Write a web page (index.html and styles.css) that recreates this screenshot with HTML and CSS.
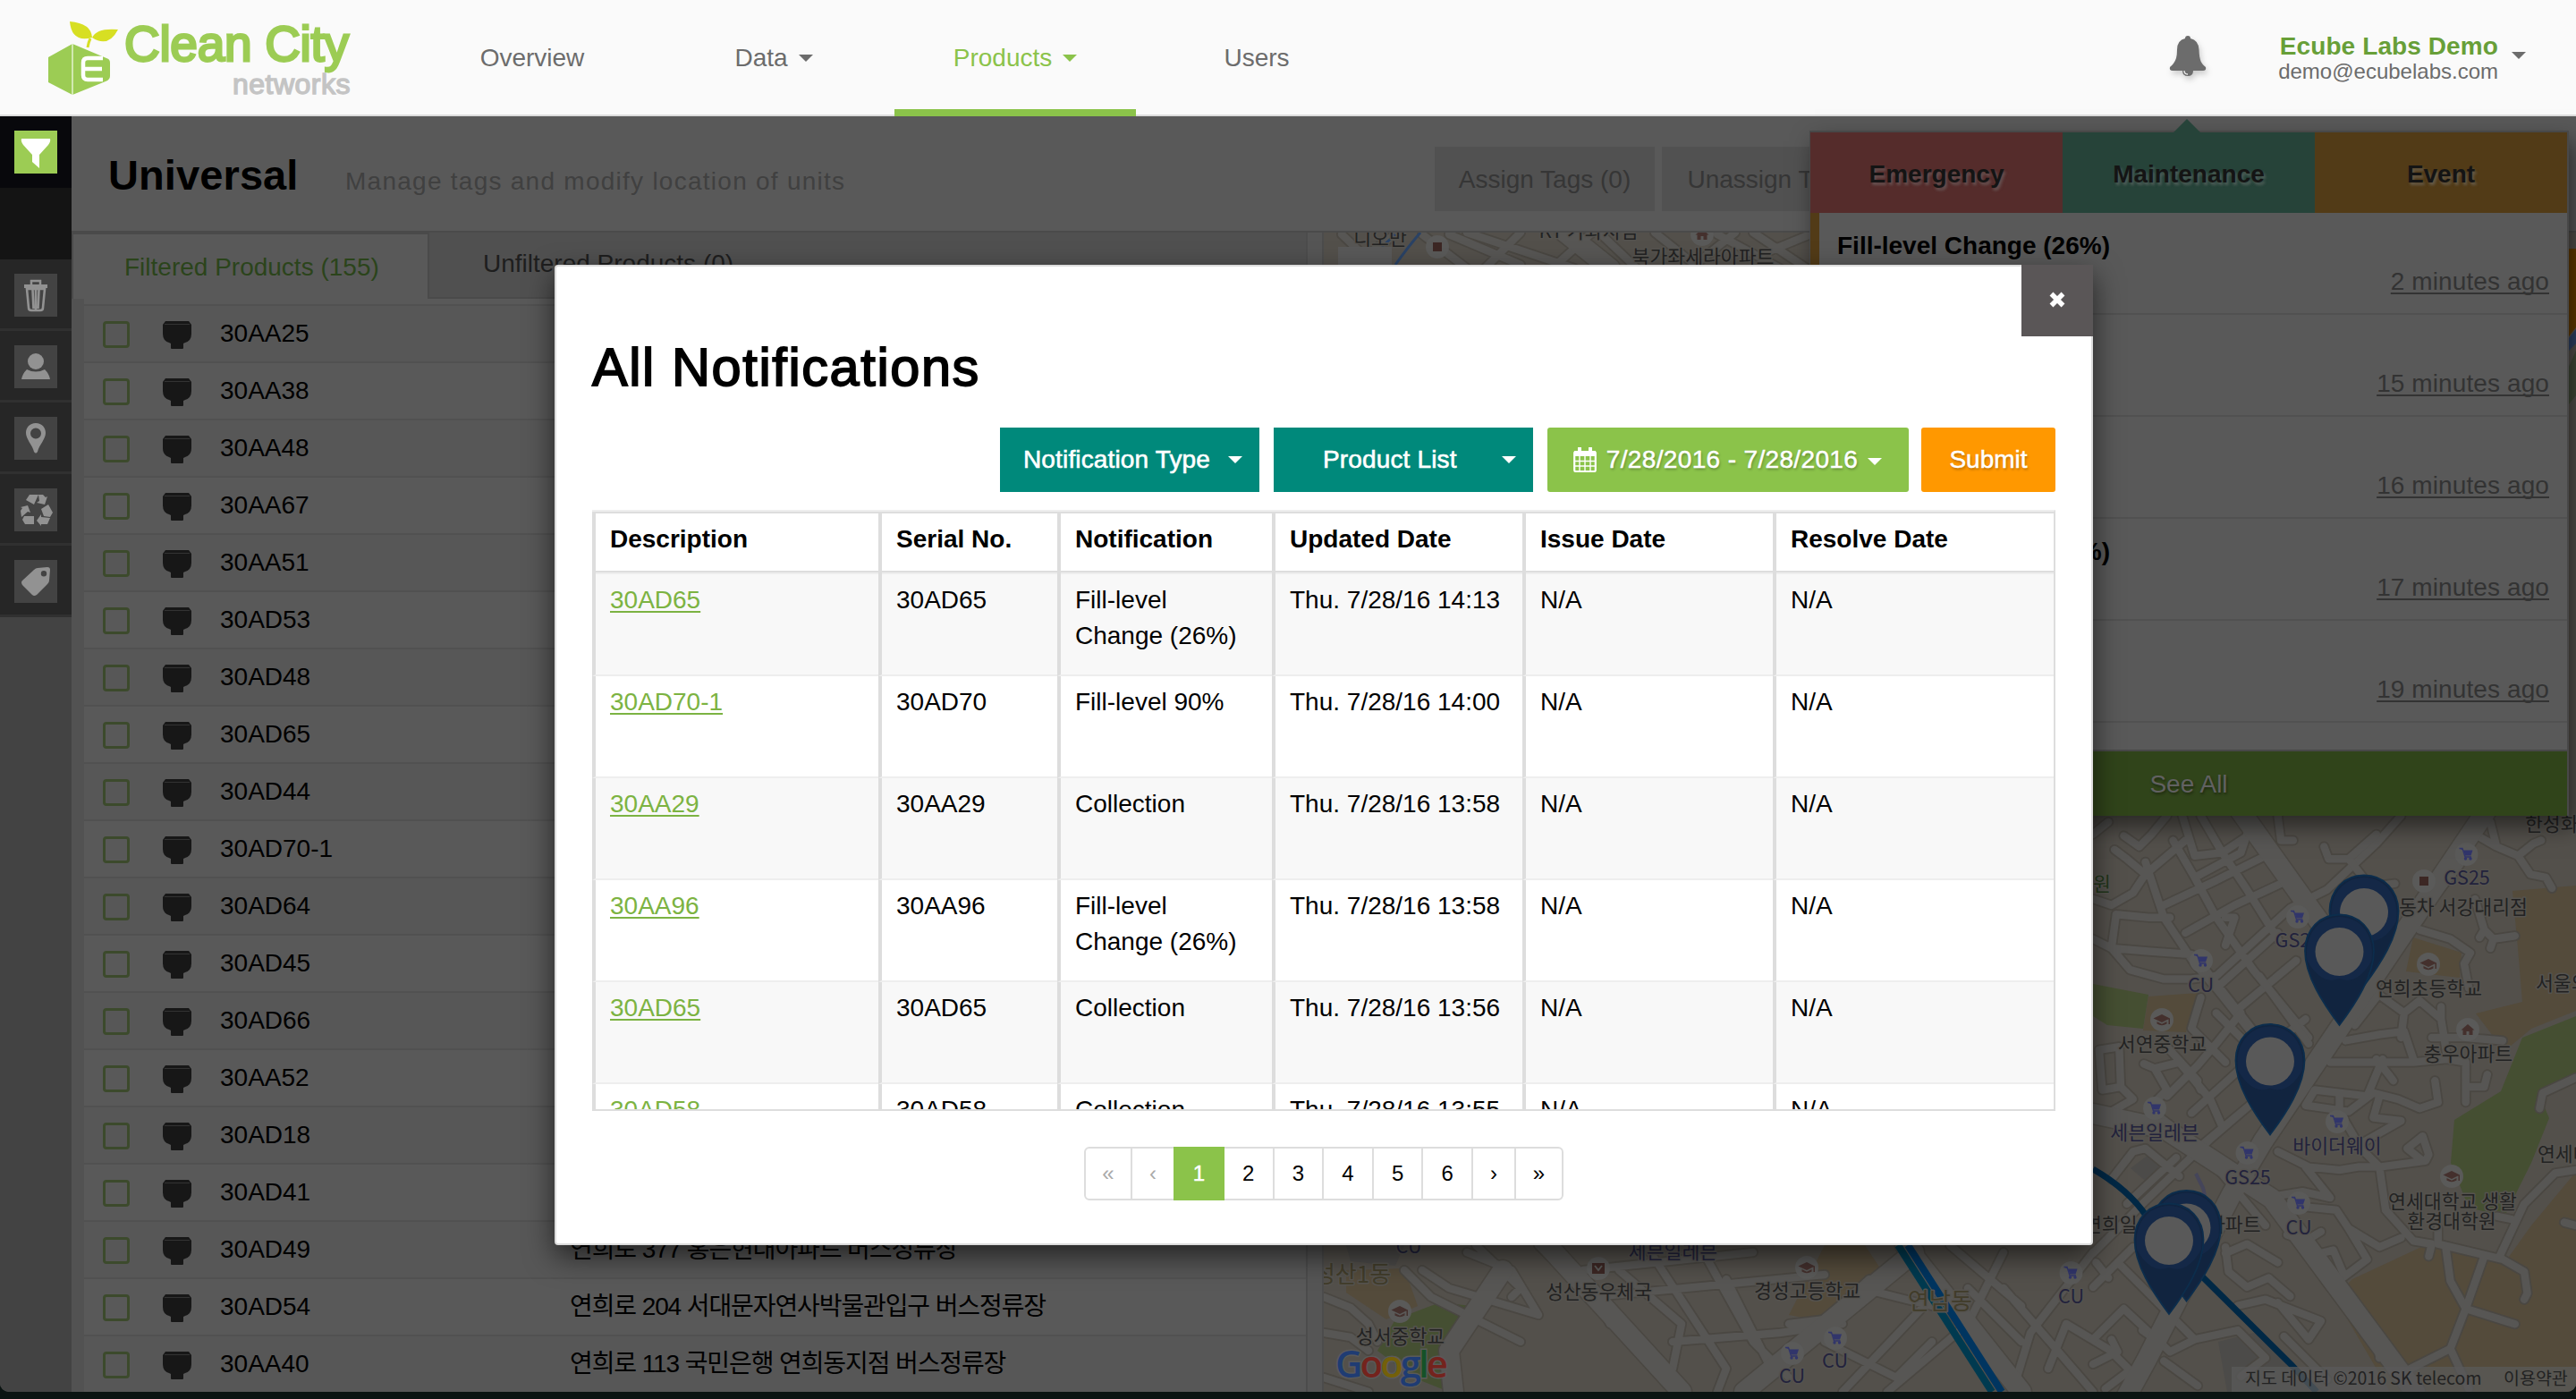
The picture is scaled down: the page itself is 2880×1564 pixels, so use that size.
FILE: index.html
```html
<!DOCTYPE html>
<html lang="en">
<head>
<meta charset="utf-8">
<title>Clean City Networks</title>
<link rel="stylesheet" href="styles.css">
</head>
<body>
<svg class="sprite" aria-hidden="true">
  <symbol id="bin" viewBox="0 0 32 31"><path d="M3 0h26l3 4v10q0 8-7 10l-2 1v5q0 1-1 1H10q-1 0-1-1v-5l-2-1Q0 22 0 14V4z" fill="#171717"/><path d="M2 3.5h28" stroke="#333" stroke-width="1"/></symbol>
  <g id="cart"><circle r="13" fill="#5a5a59"/><path d="M-7-6h3l2.5 7.5H5L7-4.500H-3.500z" fill="#31356b"/><path d="M-8-6.500h3.500l3 9.500H5.500" fill="none" stroke="#31356b" stroke-width="1.300"/><circle cx="-1" cy="5" r="1.700" fill="#31356b"/><circle cx="4.500" cy="5" r="1.700" fill="#31356b"/></g>
  <g id="school"><circle r="13" fill="#5a5a59"/><path d="M-9.500-1.500L0-6l9 4.500L0 3zM-5.500 2L0 4.800 5.500 2v2.500Q0 8-5.500 4.500zM7.500-1.500H9V5H7.500z" fill="#44302d"/></g>
  <g id="house"><circle r="13" fill="#5a5a59"/><path d="M0-6l7.500 6.500H5.500V6h-4V2h-3v4h-4V.5h-2z" fill="#44302d"/></g>
  <g id="square"><circle r="13" fill="#5a5a59"/><path d="M-5-5H5V5H-5z" fill="#3c2724"/></g>
  <g id="post"><circle r="13" fill="#5a5a59"/><path d="M-7-6H7V6H-7z" fill="#3c2724"/><path d="M-4-3l4 5 4-5" fill="none" stroke="#5a5a59" stroke-width="2"/></g>
  <g id="pin"><path d="M0-41.500C22-41.500 38.500-25 38.500-1 38.500 27 18 58 0 82-18 58-38.500 27-38.500-1-38.500-25-22-41.500 0-41.500z" fill="#11243f" stroke="#0c2d4c" stroke-width="1.800"/><path d="M-36 10C-40-20-22-39 0-39S40-20 36 10Q20 38 0 30-20 38-36 10z" fill="#152b4c" opacity=".7"/><circle r="27" fill="#595959"/></g>
</svg>

<header class="header">
  <div class="brand">
    <svg class="brand-mark" width="82" height="86" viewBox="52 22 82 86">
      <path d="M81 49L54 64V92L81 106 118 91Q123 89 123 85V70Q123 66 119 65z" fill="#9ccc54"/>
      <path d="M81 49v57" stroke="#e4f3cf" stroke-width="1.500"/>
      <path d="M115 65H98q-5 0-5 5v14q0 5 5 5h17M94 77h20" fill="none" stroke="#fff" stroke-width="4.500"/>
      <path d="M98 53q1-6 3-10" fill="none" stroke="#d7df23" stroke-width="3"/>
      <path d="M78 24q24 2 25 18-23 6-25-18zM132 33q-24-2-29 9 18 12 29-9z" fill="#d7df23"/>
    </svg>
    <div class="brand-text"><span class="brand-name">Clean City</span><span class="brand-sub">networks</span></div>
  </div>
  <nav class="nav">
    <a class="nav-item">Overview</a>
    <a class="nav-item">Data<i class="caret"></i></a>
    <a class="nav-item is-active">Products<i class="caret"></i></a>
    <a class="nav-item">Users</a>
  </nav>
  <svg class="bell" width="42" height="48" viewBox="0 0 42 48"><path d="M21 0q3 0 3 3 9 2 9.500 12.500C34 28 36 31 41 35q1 4-3 4H4q-4 0-3-4 5-4 7-10 1-4 1-9.500Q9 5 18 3q0-3 3-3z" fill="#6c6c6c"/><path d="M15 39h12q0 6-6 6t-6-6z" fill="#6c6c6c"/><path d="M17 39q0 4 4 4" stroke="#eee" fill="none" stroke-width="1.300"/></svg>
  <div class="account"><strong>Ecube Labs Demo</strong><span>demo@ecubelabs.com</span></div>
  <i class="caret account-caret"></i>
</header>

<main class="main">
  <aside class="sidebar">
    <div class="side-item side-filter"><svg class="side-icon" viewBox="0 0 48 48"><path fill="#fff" d="M8 9h32q1 3-2 7L28 27v15l-8-7v-8L10 16Q7 12 8 9z"/></svg></div>
    <div class="side-gap"></div>
    <div class="side-item"><svg class="side-icon" viewBox="0 0 48 48"><path fill="none" stroke="#929292" stroke-width="2.500" d="M19 12V8h10v4"/><path fill="#929292" d="M11 12h26v4H11z"/><path fill="none" stroke="#929292" stroke-width="2.600" d="M14 17l2 21q0 3 3 3h10q3 0 3-3l2-21zM20.500 18l1 21M27.500 18l-1 21M24 18v22"/></svg></div>
    <div class="side-item"><svg class="side-icon" viewBox="0 0 48 48"><circle cx="24" cy="18" r="9" fill="#929292"/><path fill="#929292" d="M14 27q10 5 20 0 5 5 6 11H8q1-6 6-11z"/></svg></div>
    <div class="side-item"><svg class="side-icon" viewBox="0 0 48 48"><path fill="#929292" fill-rule="evenodd" d="M24 7c7 0 11 5 11 11 0 7-7 13-9 21q-2 3-4 0c-2-8-9-14-9-21 0-6 4-11 11-11zm0 5.500a6 6 0 100 12 6 6 0 000-12z"/></svg></div>
    <div class="side-item"><svg class="side-icon" viewBox="0 0 48 48"><g fill="#929292"><path d="M17 7h10l-5 11-9-5zM27 7l5 0 3 3 2-1-3 9-9-2 3-2zM38 18l5 9-3 5-7-1-3-8zM40 33l-3 7h-7v2l-5-6 5-7v3zM22 31v9H12l-3-5 2-4zM8 32l-1-7 2-3-2-1 8-2 3 8-3-1z"/></g></svg></div>
    <div class="side-item"><svg class="side-icon" viewBox="0 0 48 48"><path fill="#929292" fill-rule="evenodd" d="M26 9l11-1q3 0 3 3l-1 12q0 2-2 4L25 39q-3 2-5 0L9 28q-2-3 0-5L22 11q2-2 4-2zm7 3a3.200 3.200 0 100 6.400 3.200 3.200 0 000-6.400z"/></svg></div>
  </aside>

  <section class="content">
    <div class="toolbar">
      <div class="heading"><h1>Universal</h1><p>Manage tags and modify location of units</p></div>
      <button class="tag-btn">Assign Tags (0)</button>
      <button class="tag-btn">Unassign Tags (0)</button>
    </div>
    <div class="split">
      <div class="products">
        <div class="tabs"><div class="tab is-current">Filtered Products (155)</div><div class="tab tab-rest">Unfiltered Products (0)</div></div>
        <ul class="list">
          <li><i class="check"></i><svg class="bin"><use href="#bin"/></svg><span>30AA25</span></li>
          <li><i class="check"></i><svg class="bin"><use href="#bin"/></svg><span>30AA38</span></li>
          <li><i class="check"></i><svg class="bin"><use href="#bin"/></svg><span>30AA48</span></li>
          <li><i class="check"></i><svg class="bin"><use href="#bin"/></svg><span>30AA67</span></li>
          <li><i class="check"></i><svg class="bin"><use href="#bin"/></svg><span>30AA51</span></li>
          <li><i class="check"></i><svg class="bin"><use href="#bin"/></svg><span>30AD53</span></li>
          <li><i class="check"></i><svg class="bin"><use href="#bin"/></svg><span>30AD48</span></li>
          <li><i class="check"></i><svg class="bin"><use href="#bin"/></svg><span>30AD65</span></li>
          <li><i class="check"></i><svg class="bin"><use href="#bin"/></svg><span>30AD44</span></li>
          <li><i class="check"></i><svg class="bin"><use href="#bin"/></svg><span>30AD70-1</span></li>
          <li><i class="check"></i><svg class="bin"><use href="#bin"/></svg><span>30AD64</span></li>
          <li><i class="check"></i><svg class="bin"><use href="#bin"/></svg><span>30AD45</span></li>
          <li><i class="check"></i><svg class="bin"><use href="#bin"/></svg><span>30AD66</span></li>
          <li><i class="check"></i><svg class="bin"><use href="#bin"/></svg><span>30AA52</span></li>
          <li><i class="check"></i><svg class="bin"><use href="#bin"/></svg><span>30AD18</span></li>
          <li><i class="check"></i><svg class="bin"><use href="#bin"/></svg><span>30AD41</span></li>
          <li><i class="check"></i><svg class="bin"><use href="#bin"/></svg><span>30AD49</span><span class="address">연희로 377 홍은현대아파트 버스정류장</span></li>
          <li><i class="check"></i><svg class="bin"><use href="#bin"/></svg><span>30AD54</span><span class="address">연희로 204 서대문자연사박물관입구 버스정류장</span></li>
          <li><i class="check"></i><svg class="bin"><use href="#bin"/></svg><span>30AA40</span><span class="address">연희로 113 국민은행 연희동지점 버스정류장</span></li>
        </ul>
      </div>
      <div class="gutter"></div>
      <svg class="map" viewBox="1480 260 1400 1296">
        <defs>
          <!-- neighbourhood streets east of the station -->
          <g id="streets-east" class="streets" transform="translate(2340 912) scale(.34439)">
            <path d="M0 270L60 290 130 250 170 190 300 80M170 190L110 140 70 110M100 65L150 100 190 60 240 0M170 150L230 330 330 480 400 560 560 760M260 80L330 200 400 330 520 500 700 720M350 0L420 120 500 240 600 400M290 0L330 130 420 120 540 40M330 200L480 120 500 60M230 290L400 210 560 130M300 380L460 290 610 220M75 320L60 430 180 440 320 450M60 430L120 500 230 530 320 530 400 520 640 300 760 240 920 90 1000 0M0 400L60 430M75 320L180 330 250 330M430 330L460 330 430 420M350 480L460 620 600 800M400 560L600 380M480 620L660 470M560 760L690 660M0 60L50 20"/>
            <path d="M20 760L85 750 90 880 30 890zM165 805L200 820 280 800 380 920 420 1010M90 880L130 920 60 960M200 820L240 890 180 950 350 1080 560 1330M240 910L340 810 400 740 480 640M320 965L480 820 560 760M340 1080L520 930 640 800M0 1420L160 1260 380 1050 520 930M60 1180L130 1090 170 1080M110 1260L270 1110M170 1080L280 1170M340 870L350 890M240 750L340 860M350 590L320 690 430 800M400 640L500 740M540 520L620 630 700 740"/>
            <path d="M600 0L610 80 650 80M750 100L765 140 830 140 920 60M830 140L900 230 980 220M1240 60L1310 100 1380 130 1430 90 1455 80M1290 20L1310 100M1380 130L1420 190 1470 200 1490 235M1060 370L1160 400 1225 445 1205 480 1220 560M1240 270L1270 370 1300 400 1370 390M1270 370L1255 395M1300 400L1290 430M1060 340L1110 260 1190 160M820 730L930 710 1010 700 1040 790M900 560L1010 640 1000 720M920 590L850 680M1010 640L1060 600 1130 660 1140 720 1210 720 1330 730M1130 660L1130 620M1100 720L1140 720 1150 790M770 800L1040 800 1150 790 1210 800 1210 930M1210 880L1270 880 1280 840M920 790L960 840 975 860M940 790L890 910 720 890M720 890L690 940 830 960 910 900 990 920 1060 950 1120 930 1110 860M930 910L910 980 1000 990 860 1070M800 910L800 960 870 1080 930 1140 1080 1120 1090 1100 1070 1040 1020 1080 1070 1120M600 1090L700 1140 800 1150 860 1140 930 1140 950 1280 1040 1380 1100 1390 1090 1430M560 1240L680 1220 770 1240 690 1140M690 1270L790 1280 830 1340 930 1400 1000 1370M830 1340L890 1440 770 1530 700 1430 780 1410 810 1480M630 1360L690 1380 740 1350"/>
            <path d="M1120 1340L1120 1390 1330 1440 1400 1480 1410 1550 1400 1570M1320 1430L1400 1260 1500 1160 1568 1150M1145 1400L1160 1510 1210 1600 1370 1650M1270 1430L1210 1600 1160 1730 1020 1800M1160 1730L1220 1860M860 1620L920 1680 930 1760M1450 950L1460 900 1568 850M1310 1300L1360 1310M1568 1330L1530 1320M430 1400L440 1480 500 1530 570 1500 640 1560M430 1420L500 1390 600 1450M470 1590L560 1570 740 1640 700 1700 600 1580M80 1450L130 1400M0 1530L80 1450 220 1590 330 1700 250 1740 100 1600 0 1700M50 1500L10 1450M330 1700L470 1670 560 1760M620 1690L760 1830M160 1670L230 1720M480 1820L560 1760M0 1780L80 1740 60 1700M40 1860L120 1800 60 1740M230 1770L340 1850"/>
          </g>
          <g id="streets-west" class="streets">
            <path d="M1480 1450L1510 1462 1530 1480 1540 1500M1480 1490L1510 1495 1530 1510M1480 1540L1530 1556M1640 1400L1690 1420 1720 1470 1620 1440 1590 1420M1570 1420L1600 1450 1640 1470 1700 1500M1650 1392L1700 1440 1690 1450M1720 1392L1790 1460 1800 1480M1770 1420L1960 1400M1780 1450L2040 1425M1810 1420L1880 1480 1870 1530M1840 1392L1930 1530 1920 1556M1900 1392L1960 1500 2000 1540M1870 1500L1990 1490 2060 1480M1930 1430L1980 1530M2000 1480L2040 1475 2090 1430M2080 1440L2200 1470M2040 1500L2120 1540 2160 1500M2060 1556L2170 1440M2110 1556L2200 1480 2240 1400M2250 1556L2270 1490 2340 1400M2240 1440L2340 1556M2200 1440L2260 1500M2290 1530L2310 1480 2360 1510M2180 1392L2260 1460"/>
            <path d="M1480 320L1560 262M1500 262L1540 300M1590 262L1640 300M1620 262L1700 296M1660 300L1700 260M1640 260L1760 300M1780 260L1740 296M1790 262L1830 300M1850 260L1900 300M1890 300L1940 260M1960 260L2020 300M1980 280L2024 262M1920 262L1990 300"/>
          </g>
          <g id="avenues" class="streets">
            <path d="M1730 1392L1880 1556M1950 1556L2140 1400M1625 1556L1620 1510 1680 1420M2130 1392L2260 1556" />
            <path d="M2784 900L2530 1276 2495 1335 2400 1520 2378 1560M2500 900L2600 1040M2340 1245L2420 1262 2540 1340 2700 1556M1750 260L1800 300"/>
          </g>
        </defs>
        <path class="land" d="M1480 260H2880V1556H1480z"/>
        <path class="tan" d="M1505 1420L1570 1418 1585 1460 1550 1475 1505 1445zM2040 1392H2085L2110 1430 2050 1480 2000 1470zM2402 1114L2458 1110 2444 1154 2396 1152zM2698 1048L2752 1065 2750 1093 2690 1086z"/>
        <path class="tan" d="M2809 996L2880 990V1130L2830 1150 2800 1175 2768 1133 2820 1120 2815 1060zM2630 1430L2720 1388 2800 1412 2830 1370 2880 1310V1556H2672L2610 1450z"/>
        <path class="green" d="M2340 1100L2402 1112 2396 1150 2356 1146 2340 1136zM2744 1252L2796 1220 2820 1160 2880 1136V1205L2838 1222 2850 1250 2830 1300 2800 1360 2760 1350 2740 1300zM1560 1475L1610 1456 1645 1460 1620 1500V1556L1580 1540 1540 1510z"/>
        <path class="paved" d="M2406 1288L2440 1310 2410 1330 2382 1306zM2480 1500L2520 1490 2600 1556H2490zM1505 1392H1570L1560 1415 1510 1410z"/>
        <use href="#streets-west" class="casing"/><use href="#streets-east" class="casing"/><use href="#avenues" class="casing wide"/>
        <use href="#streets-west" class="road"/><use href="#streets-east" class="road"/><use href="#avenues" class="road wide"/>
        <path d="M2872 278h8v88l-8 10z" fill="#633b00"/><path d="M2872 378l8-10v16l-8 8z" fill="#2f4365"/><path d="M2872 410l8-18v50l-8 10z" fill="#424a38"/>
        <path d="M2340 1307Q2380 1330 2400 1360L2462 1427 2562 1526 2590 1556" fill="none" stroke="#002845" stroke-width="7"/>
        <path d="M2122 1392L2227 1556" stroke="#003a50" stroke-width="8"/><path d="M2133 1392L2238 1556" stroke="#003560" stroke-width="8"/>
        <path d="M1560 262L1545 276M1588 260Q1575 275 1560 296" stroke="#2a4265" stroke-width="3" fill="none"/>
        <path d="M2455 1312l8 16 2 8" stroke="#45455a" stroke-width="4" fill="none"/>
        <path d="M2495 1528H2880v28H2495z" fill="#595959" opacity=".75"/>
        <g transform="translate(13 13)">
          <use href="#cart" x="2744.500" y="942"/><use href="#square" x="2697" y="972"/><use href="#cart" x="2556" y="1012"/><use href="#cart" x="2448" y="1061"/><use href="#school" x="2702" y="1065"/><use href="#school" x="2404" y="1127"/><use href="#house" x="2746" y="1138"/><use href="#cart" x="2396" y="1226"/><use href="#cart" x="2600" y="1241"/><use href="#cart" x="2499.500" y="1276"/><use href="#school" x="2728" y="1302"/><use href="#cart" x="2557" y="1332"/><use href="#cart" x="2302.500" y="1410"/>
          <use href="#post" x="1774" y="1405"/><use href="#school" x="2007" y="1404"/><use href="#school" x="1552" y="1453"/><use href="#cart" x="2039" y="1483"/><use href="#cart" x="1991" y="1500"/><use href="#square" x="1594" y="263"/><use href="#house" x="1890" y="249"/>
        </g>
        <g class="label middle">
          <text class="shop" x="2758" y="989">GS25</text><text class="shop" x="2460.500" y="1108.500">CU</text><text x="2715.500" y="1113">연희초등학교</text><text x="2417.500" y="1175">서연중학교</text><text x="2759.500" y="1186">충우아파트</text><text class="shop" x="2409" y="1273.500">세븐일레븐</text><text class="shop" x="2613" y="1288.500">바이더웨이</text><text class="shop" x="2513" y="1323.500">GS25</text><text x="2742" y="1351">연세대학교 생활</text><text x="2741" y="1373">환경대학원</text><text class="shop" x="2570" y="1379.500">CU</text><text class="shop" x="2315.500" y="1457">CU</text>
          <text class="shop" x="1575" y="1401">CU</text><text x="1787.500" y="1452">성산동우체국</text><text class="shop" x="1870.500" y="1407">세븐일레븐</text><text x="2020.500" y="1451">경성고등학교</text><text x="1565.500" y="1502">성서중학교</text><text class="shop" x="2051.500" y="1529">CU</text><text class="shop" x="2003.500" y="1546">CU</text><text x="1543" y="274">디오만</text><text x="1776" y="266">KT 가좌지점</text><text x="1904" y="295">북가좌세라아파트</text>
          <text class="district" x="2169" y="1464">연남동</text><text class="district" x="1512" y="1434">성산1동</text>
        </g>
        <g class="label">
          <text class="shop" x="2543.500" y="1059">GS25</text><text x="2682" y="1022">동차 서강대리점</text><text x="2835" y="1107">서울외국인학교</text><text x="2837" y="1298">연세대학교</text><text x="2823" y="929">한성화교</text><text x="2330" y="1377">연희일</text><text x="2468" y="1377">아파트</text><text class="park" x="2340" y="996">원</text>
          <text class="legal" x="2510" y="1548">지도 데이터 ©2016 SK telecom</text><text class="legal" x="2799" y="1548">이용약관</text>
        </g>
        <path d="M1496 276h60v60h-60z" fill="#595959"/>
        <g>
          <use href="#pin" x="2643" y="1020"/><use href="#pin" x="2615.500" y="1064"/><use href="#pin" x="2538" y="1186.500"/><use href="#pin" x="2444.500" y="1372.500"/><use href="#pin" x="2425" y="1387"/>
        </g>
        <text class="google" x="1493" y="1540"><tspan fill="#1f3c73">G</tspan><tspan fill="#74231d">o</tspan><tspan fill="#74600a">o</tspan><tspan fill="#1f3c73">g</tspan><tspan fill="#155228">l</tspan><tspan fill="#74231d">e</tspan></text>
      </svg>
    </div>
  </section>
</main>

<aside class="panel">
  <div class="panel-tabs"><span class="emergency">Emergency</span><span class="maintenance">Maintenance</span><span class="event">Event</span></div>
  <div class="alert"><b>Fill-level Change (26%)</b><u>2 minutes ago</u></div>
  <div class="alert"><b></b><u>15 minutes ago</u></div>
  <div class="alert"><b></b><u>16 minutes ago</u></div>
  <div class="alert"><b>Fill-level Change (26%)</b><u>17 minutes ago</u></div>
  <div class="alert"><b></b><u>19 minutes ago</u></div>
  <div class="see-all">See All</div>
</aside>

<section class="modal">
  <div class="modal-top">
    <h2>All Notifications</h2>
    <button class="close"><svg width="20" height="20" viewBox="0 0 20 20"><path d="M3.500 3.500l13 13M16.500 3.500l-13 13" stroke="#fff" stroke-width="5.500"/></svg></button>
  </div>
  <div class="filters">
    <button class="filter teal"><span>Notification Type</span><i class="caret"></i></button>
    <button class="filter teal"><span>Product List</span><i class="caret"></i></button>
    <button class="filter dates"><svg width="26" height="28" viewBox="0 0 26 28"><rect x="1.200" y="5" width="23.600" height="22" rx="1.500" fill="none" stroke="#fff" stroke-width="2.200"/><path d="M1 4h24v6H1z" fill="#fff"/><path d="M7 1v6M19 1v6" stroke="#fff" stroke-width="4" stroke-linecap="round"/><path d="M7 10v16M13 10v16M19 10v16M2 15.500h22M2 21h22" stroke="#fff" stroke-width="1.400"/></svg><span>7/28/2016 - 7/28/2016</span><i class="caret"></i></button>
    <button class="filter submit">Submit</button>
  </div>
  <div class="table">
    <div class="tr th"><span>Description</span><span>Serial No.</span><span>Notification</span><span>Updated Date</span><span>Issue Date</span><span>Resolve Date</span></div>
    <div class="tr odd"><span><a>30AD65</a></span><span>30AD65</span><span>Fill-level Change (26%)</span><span>Thu. 7/28/16 14:13</span><span>N/A</span><span>N/A</span></div>
    <div class="tr"><span><a>30AD70-1</a></span><span>30AD70</span><span>Fill-level 90%</span><span>Thu. 7/28/16 14:00</span><span>N/A</span><span>N/A</span></div>
    <div class="tr odd"><span><a>30AA29</a></span><span>30AA29</span><span>Collection</span><span>Thu. 7/28/16 13:58</span><span>N/A</span><span>N/A</span></div>
    <div class="tr"><span><a>30AA96</a></span><span>30AA96</span><span>Fill-level Change (26%)</span><span>Thu. 7/28/16 13:58</span><span>N/A</span><span>N/A</span></div>
    <div class="tr odd"><span><a>30AD65</a></span><span>30AD65</span><span>Collection</span><span>Thu. 7/28/16 13:56</span><span>N/A</span><span>N/A</span></div>
    <div class="tr"><span><a>30AD58</a></span><span>30AD58</span><span>Collection</span><span>Thu. 7/28/16 13:55</span><span>N/A</span><span>N/A</span></div>
  </div>
  <div class="pager"><span class="off">«</span><span class="off narrow">‹</span><span class="current">1</span><span>2</span><span>3</span><span>4</span><span>5</span><span>6</span><span class="narrow">›</span><span class="last">»</span></div>
</section>
</body>
</html>
```
FILE: styles.css
```css
* { box-sizing: border-box; }
html, body { margin: 0; height: 100%; }
body {
  position: relative;
  height: 1564px;
  overflow: hidden;
  background: #0b1412;
  color: #000;
  font: 28px/40px "Liberation Sans", "Noto Sans CJK KR", sans-serif;
}
button { font: inherit; border: 0; padding: 0; margin: 0; }
.sprite { display: none; }
.caret { display: inline-block; border: 8px solid transparent; border-top-color: currentColor; border-bottom: 0; }

/* header */
.header { display: flex; align-items: center; height: 130px; background: #fafafa; border-bottom: 2px solid #dcdcdc; color: #6c6c6c; }
.brand { display: flex; width: 460px; height: 128px; padding: 22px 0 0 52px; }
.brand-text { display: flex; flex-direction: column; width: 262px; margin-left: 5px; }
.brand-name { color: #9ccc54; font-size: 55px; line-height: 56px; letter-spacing: -.3px; -webkit-text-stroke: 2.8px #9ccc54; margin-top: -1px; white-space: nowrap; }
.brand-sub { width: 253px; text-align: right; color: #c4c4c4; font-size: 32px; line-height: 32px; letter-spacing: .5px; -webkit-text-stroke: 1.4px #c4c4c4; margin-top: 1px; }
.nav { display: grid; grid-template-columns: repeat(4, 270px); height: 130px; align-self: flex-start; }
.nav-item { display: flex; align-items: center; justify-content: center; gap: 12px; padding-top: 8px; border-bottom: 8px solid transparent; }
.nav-item.is-active { color: #8bc34a; border-color: #8bc34a; }
.bell { margin-left: 885px; filter: drop-shadow(2px 4px 3px rgba(0, 0, 0, .18)); }
.account { display: flex; flex-direction: column; align-items: flex-end; width: 326px; line-height: 28px; padding-top: 3px; }
.account strong { color: #689f38; letter-spacing: .1px; }
.account span { font-size: 24px; }
.account-caret { margin: -4px 0 0 15px; }

/* page behind the dialog */
.main { display: flex; height: 1426px; background: #595959; border-radius: 0 0 10px 10px; overflow: hidden; }
.sidebar { width: 80px; background: #434343; }
.side-item { display: flex; justify-content: center; height: 80px; padding-top: 16px; background: #262626; border-bottom: 3px solid #303030; }
.side-icon { width: 48px; height: 48px; background: #434343; }
.side-filter { background: #08080c; border: 0; }
.side-filter .side-icon { background: #9ccc54; }
.side-gap { height: 80px; background: #141414; }
.content { flex: 1; min-width: 0; }
.toolbar { display: flex; gap: 8px; height: 130px; padding: 34px 0 0 41px; border-bottom: 2px solid #4a4a4a; }
.heading { display: flex; align-items: baseline; width: 1475px; padding-top: 4px; }
.heading h1 { margin: 0; width: 265px; font-size: 47px; line-height: 56px; letter-spacing: .1px; }
.heading p { margin: 0; color: #404040; letter-spacing: 1.26px; }
.tag-btn { width: 246px; height: 72px; padding-top: 2px; background: #515151; color: #363636; white-space: nowrap; }
.tag-btn + .tag-btn { width: 282px; }
.split { display: flex; height: 1296px; }
.products { width: 1382px; border-right: 2px solid #4c4c4c; background: #525252; }
.tabs { display: flex; height: 74px; }
.tab { padding-left: 57px; }
.is-current { width: 400px; padding-top: 17px; background: #595959; color: #2b441b; border: solid #4a4a4a; border-width: 2px 2px 0 2px; }
.tab-rest { flex: 1; padding: 15px 0 0 60px; background: #505050; color: #1e1e1e; border-bottom: 2px solid #4a4a4a; }
.list { margin: 0 0 0 14px; padding: 6px 0 0; list-style: none; background: #595959; }
.list li { display: flex; height: 64px; padding: 12px 0 0 21px; border-top: 2px solid #515151; background: #575757; white-space: nowrap; }
.list li:nth-child(even) { background: #595959; }
.check { width: 30px; height: 30px; margin-top: 5px; border: 3px solid #3c4a2c; border-radius: 4px; }
.bin { width: 32px; height: 31px; margin: 5px 32px 0 37px; }
.list span { width: 391px; line-height: 38px; }
.list .address { width: auto; letter-spacing: -1.1px; }
.gutter { width: 18px; background: #555; border-right: 2px solid #4c4c4c; }

/* map */
.map { width: 1400px; height: 1296px; }
.land { fill: #53504b; }
.tan { fill: #544b3b; }
.green { fill: #454f32; }
.paved { fill: #4c4b49; }
.streets path { fill: none; stroke-linejoin: round; stroke-linecap: round; vector-effect: non-scaling-stroke; }
.casing { stroke: #4a4742; stroke-width: 12px; }
.road { stroke: #575654; stroke-width: 8.5px; }
.casing.wide { stroke-width: 25px; }
.road.wide { stroke-width: 22px; }
.label { font: 21.6px "Noto Sans CJK KR", sans-serif; fill: #222; stroke: #55534f; stroke-width: 3px; paint-order: stroke; stroke-linejoin: round; }
.middle { text-anchor: middle; }
.shop { fill: #22223c; }
.park { fill: #21361a; }
.district { font-size: 26px; fill: #413c2a; }
.legal { font-size: 19.5px; stroke: none; }
.google { font: 600 42px "Open Sans", sans-serif; letter-spacing: -3px; stroke: #5a5a59; stroke-width: 3px; paint-order: stroke; }

/* notification dropdown */
.panel { position: absolute; left: 2023px; top: 146px; width: 849px; height: 766px; background: #595959; border: solid #484848; border-width: 2px 2px 0 1px; box-shadow: 6px 12px 24px rgba(0, 0, 0, .5); }
.panel::before { content: ""; position: absolute; left: 405px; top: -15px; border: 16px solid transparent; border-top: 0; border-bottom-color: #264339; }
.panel-tabs { display: grid; grid-template-columns: repeat(3, 1fr); height: 90px; font-weight: bold; text-align: center; line-height: 93px; color: #141414; text-shadow: 2px 3px 3px rgba(120, 120, 120, .5); }
.panel-tabs span { height: 90px; }
.emergency { background: #552c2b; }
.maintenance { background: #264339; }
.event { background: #523b17; }
.alert { display: flex; flex-direction: column; height: 114px; padding: 17px 20px 0 20px; border-left: 10px solid #523b17; border-bottom: 2px solid #515151; }
.alert b { height: 40px; }
.alert u { align-self: flex-end; color: #333; letter-spacing: .1px; text-decoration-thickness: 2px; text-underline-offset: 3px; text-decoration-skip-ink: none; }
.see-all { height: 74px; margin-top: 30px; border-top: 2px solid #484848; background: #30441a; color: #616161; text-align: center; line-height: 73px; text-shadow: 1px 2px 3px rgba(0, 0, 0, .4); }

/* dialog */
.modal { position: absolute; left: 620px; top: 296px; width: 1720px; height: 1096px; padding: 0 40px; background: #fff; border: 2px solid #dcdcdc; border-radius: 4px; box-shadow: 0 12px 32px rgba(0, 0, 0, .6); }
.modal-top { display: flex; justify-content: space-between; height: 180px; margin-right: -42px; }
.modal h2 { margin: 77px 0 0; font-size: 59.5px; font-weight: normal; line-height: 72px; letter-spacing: 1.6px; -webkit-text-stroke: 1.8px #000; }
.close { display: grid; place-items: center; width: 80px; height: 80px; margin-top: -2px; padding-bottom: 3px; background: #5a5657; }
.filters { display: flex; justify-content: flex-end; height: 92px; }
.filter { display: flex; align-items: center; justify-content: space-between; height: 72px; color: #fff; }
.filter .caret { border-width: 8px 8px 0; }
.teal { width: 290px; padding: 0 19px 0 26px; margin-right: 16px; background: #00897b; letter-spacing: .15px; -webkit-text-stroke: .6px #fff; }
.teal + .teal { padding-left: 55px; }
.dates { width: 404px; padding: 0 30px 0 29px; margin-right: 14px; background: #8bc34a; border-radius: 3px; letter-spacing: .35px; text-shadow: 1px 2px 3px rgba(0, 0, 0, .3); -webkit-text-stroke: .5px #fff; }
.dates .caret { margin-top: 3px; }
.submit { width: 150px; justify-content: center; background: #ff9800; border-radius: 3px; text-shadow: 1px 2px 3px rgba(0, 0, 0, .3); -webkit-text-stroke: .5px #fff; }
.table { height: 672px; border-top: 2px solid #eee; border-bottom: 2px solid #ddd; border-right: 2px solid #ddd; overflow: hidden; }
.tr { display: grid; grid-template-columns: 320px 200px 240px 280px 280px 314px; height: 114px; }
.tr span { padding: 9px 16px 0; border-left: 4px solid #ddd; border-bottom: 2px solid #eee; }
.odd span { background: #f8f8f8; }
.th { height: 70px; font-weight: bold; border-top: 2px solid #ddd; }
.th span { border-bottom: 0; box-shadow: inset 0 -2px #eee, inset 0 -4px #ddd; }
.tr a { color: #7cb342; text-decoration: underline 2px; text-underline-offset: 3px; text-decoration-skip-ink: none; }
.pager { display: flex; width: 536px; height: 60px; margin: 40px 0 0 550px; border: 2px solid #ddd; border-radius: 6px; font-size: 24px; line-height: 55px; text-align: center; }
.pager span { width: 55.6px; border-right: 2px solid #ddd; }
.pager .off { width: 52px; color: #aaa; }
.pager .narrow { width: 48px; }
.pager .current { width: 57px; margin: -2px 0; padding-top: 2px; background: #8bc34a; color: #fff; border: 0; -webkit-text-stroke: .5px #fff; }
.pager .off.narrow { width: 46px; border-right: 0; }
.pager .last { flex: 1; border: 0; }
```
